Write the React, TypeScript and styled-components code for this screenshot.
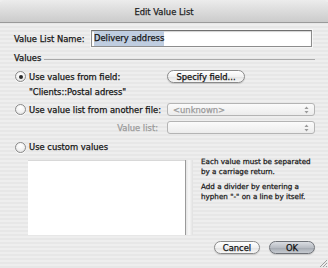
import React from "react";
import styled, { createGlobalStyle } from "styled-components";

const Global = createGlobalStyle`
  html, body { margin: 0; padding: 0; }
  body { width: 328px; height: 268px; overflow: hidden; font-family: "DejaVu Sans", "Liberation Sans", sans-serif; }
`;

const Window = styled.div`
  position: relative;
  width: 328px;
  height: 268px;
  display: flex;
  flex-direction: column;
  background: repeating-linear-gradient(to bottom, #eeeeee 0px, #eeeeee 2px, #e7e7e7 2px, #e7e7e7 4px);
  color: #151515;
  font-size: 8.4px;
  -webkit-text-stroke: 0.25px currentColor;
  overflow: hidden;
`;

const TitleBar = styled.div`
  height: 21px;
  flex: none;
  display: flex;
  align-items: center;
  justify-content: center;
  background: linear-gradient(to bottom, #ececec 0%, #dddddd 45%, #cbcbcb 100%);
  border-bottom: 1px solid #9a9a9a;
  border-radius: 5px 5px 0 0;
  font-size: 8.4px;
  color: #1e1e1e;
  padding-top: 1px;
`;

const Content = styled.div`
  display: flex;
  flex-direction: column;
  padding: 0 13px 0 14px;
`;

const NameRow = styled.div`
  margin-top: 7px;
  display: grid;
  grid-template-columns: 77px 221px;
  align-items: center;
  height: 17px;
`;

const TextField = styled.div`
  height: 17px;
  box-sizing: border-box;
  background: #fff;
  border: 1px solid #8d8d8d;
  border-top-color: #6f6f6f;
  box-shadow: inset 0 1px 1px rgba(0, 0, 0, 0.18), 0 0 0 1px rgba(255,255,255,0.6);
  display: flex;
  align-items: center;
  padding-left: 2px;
`;

const Selection = styled.span`
  background: #bfcde0;
  padding: 1px 0;
  line-height: 13px;
`;

const SectionHeader = styled.div`
  margin-top: 6px;
  height: 10px;
  display: flex;
  align-items: center;
  gap: 3px;
`;

const Rule = styled.div`
  flex: 1;
  height: 1px;
  background: #a9a9a9;
  margin-top: 3px;
`;

const OptionsGrid = styled.div`
  display: grid;
  grid-template-columns: 153px 148px;
  align-items: center;
`;

const RadioLabel = styled.div<{ $mt: number; $h: number }>`
  margin-top: ${(p) => p.$mt}px;
  height: ${(p) => p.$h}px;
  display: flex;
  align-items: center;
  gap: 3px;
  white-space: nowrap;
`;

const Radio = styled.span<{ $on?: boolean }>`
  width: 9px;
  height: 9px;
  margin-left: 1px;
  border-radius: 50%;
  border: 1px solid #8a8a8a;
  background: radial-gradient(circle at 50% 30%, #ffffff 0%, #f2f2f2 55%, #d6d6d6 100%);
  box-shadow: 0 1px 0 rgba(255,255,255,0.7);
  display: flex;
  align-items: center;
  justify-content: center;
  flex: none;
  &::after {
    content: "";
    display: ${(p) => (p.$on ? "block" : "none")};
    width: 4px;
    height: 4px;
    border-radius: 50%;
    background: #2b2b2b;
  }
`;

const ControlCell = styled.div<{ $mt: number }>`
  margin-top: ${(p) => p.$mt}px;
`;

const PillButton = styled.div<{ $default?: boolean; $w: number }>`
  width: ${(p) => p.$w}px;
  height: 13px;
  box-sizing: border-box;
  border-radius: 7px;
  border: 1px solid ${(p) => (p.$default ? "#6f7278" : "#8a8a8a")};
  background: ${(p) =>
    p.$default
      ? "linear-gradient(to bottom, #dadde2 0%, #b9bdc4 50%, #a3a8b0 51%, #c6cad0 100%)"
      : "linear-gradient(to bottom, #ffffff 0%, #f1f1f1 50%, #e2e2e2 51%, #f7f7f7 100%)"};
  box-shadow: 0 1px 1px rgba(0,0,0,0.15);
  display: flex;
  align-items: center;
  justify-content: center;
  font-size: 8.4px;
  color: #111;
`;

const SubText = styled.div`
  grid-column: 1 / span 2;
  margin-top: 4px;
  height: 10px;
  line-height: 10px;
  padding-left: 15px;
`;

const Popup = styled.div`
  height: 13px;
  box-sizing: border-box;
  border: 1px solid #b4b4b4;
  border-radius: 3px;
  background: linear-gradient(to bottom, #fbfbfb, #ececec);
  display: flex;
  align-items: center;
  color: #9a9a9a;
  padding-left: 5px;
`;

const PopupText = styled.span`
  flex: 1;
`;

const Arrows = styled.svg`
  flex: none;
  margin-right: 5px;
`;

const FieldLabel = styled.div<{ $mt: number }>`
  margin-top: ${(p) => p.$mt}px;
  height: 13px;
  display: flex;
  align-items: center;
  justify-content: flex-end;
  padding-right: 9px;
  color: #9a9a9a;
`;

const CustomArea = styled.div`
  margin-top: 7px;
  margin-left: 14px;
  height: 75px;
  display: grid;
  grid-template-columns: 157px 8px 1fr;
`;

const TextBox = styled.div`
  background: #ffffff;
  border-top: 1px solid #d8d8d8;
`;

const ScrollStrip = styled.div`
  background: linear-gradient(to right, #9a9a9a 0px, #9a9a9a 1px, #e4e4e4 1px, #f8f8f8 4px, #e0e0e0 8px);
`;

const Help = styled.div`
  padding-left: 8px;
  font-size: 7.2px;
  line-height: 10px;
  color: #1a1a1a;
  display: flex;
  flex-direction: column;
  gap: 5px;
  margin-top: -3px;
  white-space: nowrap;
`;

const ButtonRow = styled.div`
  margin-top: 6px;
  display: flex;
  justify-content: flex-end;
  gap: 9px;
`;

const Grip = styled.svg`
  position: absolute;
  right: 0;
  bottom: 0;
`;

function PopArrows() {
  return (
    <Arrows width="5" height="8" viewBox="0 0 5 8">
      <path d="M2.5 0.5 L4.5 3 L0.5 3 Z" fill="#9a9a9a" />
      <path d="M2.5 7.5 L4.5 5 L0.5 5 Z" fill="#9a9a9a" />
    </Arrows>
  );
}

export default function App() {
  return (
    <>
      <Global />
      <Window>
        <TitleBar>Edit Value List</TitleBar>
        <Content>
          <NameRow>
            <span>Value List Name:</span>
            <TextField>
              <Selection>Delivery address</Selection>
            </TextField>
          </NameRow>
          <SectionHeader>
            <span>Values</span>
            <Rule />
          </SectionHeader>
          <OptionsGrid>
            <RadioLabel $mt={7} $h={13}>
              <Radio $on />
              Use values from field:
            </RadioLabel>
            <ControlCell $mt={7}>
              <PillButton $w={78}>Specify field...</PillButton>
            </ControlCell>
            <SubText>"Clients::Postal adress"</SubText>
            <RadioLabel $mt={6} $h={13}>
              <Radio />
              Use value list from another file:
            </RadioLabel>
            <ControlCell $mt={6}>
              <Popup>
                <PopupText>&lt;unknown&gt;</PopupText>
                <PopArrows />
              </Popup>
            </ControlCell>
            <FieldLabel $mt={5}>Value list:</FieldLabel>
            <ControlCell $mt={5}>
              <Popup>
                <PopupText />
                <PopArrows />
              </Popup>
            </ControlCell>
            <RadioLabel $mt={7} $h={12}>
              <Radio />
              Use custom values
            </RadioLabel>
          </OptionsGrid>
          <CustomArea>
            <TextBox />
            <ScrollStrip />
            <Help>
              <div>
                Each value must be separated
                <br />
                by a carriage return.
              </div>
              <div>
                Add a divider by entering a
                <br />
                hyphen "-" on a line by itself.
              </div>
            </Help>
          </CustomArea>
          <ButtonRow>
            <PillButton $w={46}>Cancel</PillButton>
            <PillButton $w={46} $default>OK</PillButton>
          </ButtonRow>
        </Content>
        <Grip width="9" height="9" viewBox="0 0 9 9">
          <path d="M8 1 L1 8 M8 4 L4 8 M8 7 L7 8" stroke="#8a8a8a" strokeWidth="0.8" />
        </Grip>
      </Window>
    </>
  );
}
